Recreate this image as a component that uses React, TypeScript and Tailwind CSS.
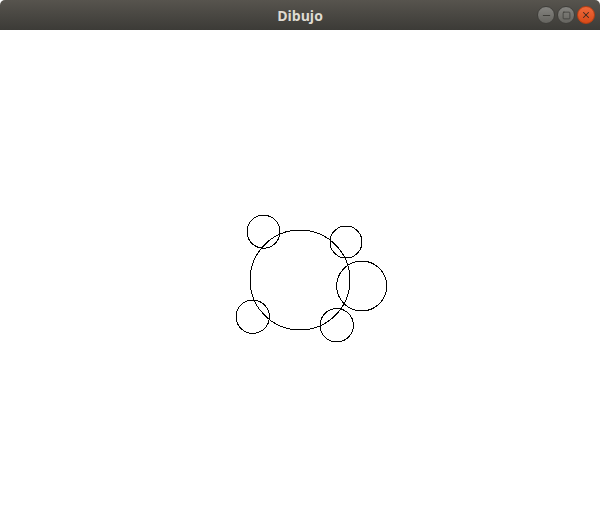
import { X, Minus, Square } from 'lucide-react';

const circles = [
  { cx: 300, cy: 280, r: 50 },
  { cx: 263.5, cy: 231.7, r: 16.5 },
  { cx: 346, cy: 242, r: 16 },
  { cx: 361.7, cy: 286, r: 25 },
  { cx: 252.7, cy: 316.7, r: 16.7 },
  { cx: 336.7, cy: 325.3, r: 16.7 },
];

function WinButton({ kind }: { kind: 'min' | 'max' | 'close' }) {
  const close = kind === 'close';
  return (
    <div
      className={`w-[18px] h-[18px] rounded-full flex items-center justify-center border ${
        close
          ? 'bg-gradient-to-b from-[#f0693a] to-[#d84a17] border-[#b83e12]'
          : 'bg-gradient-to-b from-[#858480] to-[#65645f] border-[#3f3e3a]'
      }`}
    >
      {kind === 'min' && <Minus size={11} strokeWidth={2} className="text-[#3a3935]" />}
      {kind === 'max' && <Square size={9} strokeWidth={2} className="text-[#3a3935]" />}
      {kind === 'close' && <X size={10} strokeWidth={2.5} className="text-[#3a2a22]" />}
    </div>
  );
}

export default function App() {
  return (
    <div className="w-[600px] h-[530px] bg-white flex flex-col overflow-hidden">
      <header className="h-[30px] shrink-0 rounded-t-[5px] bg-gradient-to-b from-[#57544e] to-[#3c3b37] flex items-center relative">
        <h1 className="flex-1 text-center text-[14px] font-bold text-[#dfdbd2] font-['Open_Sans',sans-serif]">
          Dibujo
        </h1>
        <div className="absolute right-[5px] top-[6px] flex gap-[2px]">
          <WinButton kind="min" />
          <WinButton kind="max" />
          <WinButton kind="close" />
        </div>
      </header>
      <svg width={600} height={500} viewBox="0 30 600 500" className="block">
        {circles.map((c, i) => (
          <circle
            key={i}
            cx={c.cx}
            cy={c.cy}
            r={c.r}
            fill="none"
            stroke="#000"
            strokeWidth={1}
            shapeRendering="crispEdges"
          />
        ))}
      </svg>
    </div>
  );
}
